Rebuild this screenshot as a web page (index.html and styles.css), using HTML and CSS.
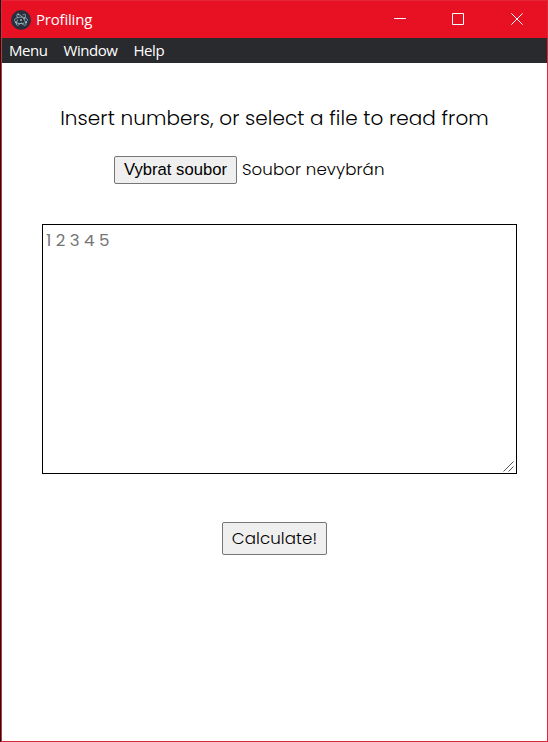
FILE: index.html
```
<!DOCTYPE html>
<html lang="en">
<head>
<meta charset="utf-8">
<title>Profiling</title>
<link rel="stylesheet" href="styles.css">
</head>
<body>
<div class="window">
  <header class="titlebar">
    <svg class="logo" viewBox="0 0 20 20">
      <circle cx="10" cy="10" r="10" fill="#2b2e3b"/>
      <g fill="none" stroke="#9fc5cf" stroke-width=".8" stroke-linecap="round">
        <path d="M8 4.600C9.600 5 12 7.200 13.500 10c1.300 2.500 1.700 4.600.8 5.200-.7.4-1.900-.2-3.200-1.400"/>
        <path d="M12.800 7.400c2.300.5 3.700 1.500 3.700 2.600 0 .7-.5 1.300-1.400 1.800M11.500 7.100c-2-.2-4.500.2-6.100 1C3 9.200 2.900 10.700 4.400 11.800"/>
        <path d="M6.300 7.500C5.600 5.700 5.600 4.500 6.300 4.200M12 4.800c1-.5 1.900-.6 2.300-.1.500.6.200 2.200-.8 4.200M5.600 12.800c1.700 1 4.800 1.200 7.400.3M6.600 9.800c-1.300 2.500-1.600 4.700-.7 5.300.8.500 2.400-.4 4.200-2.200"/>
      </g>
      <g fill="#9fc5cf"><circle cx="10" cy="10" r=".9"/><circle cx="4.800" cy="12.300" r=".9"/><circle cx="15.200" cy="12.300" r=".9"/><circle cx="7.300" cy="4.300" r=".9"/></g>
    </svg>
    <span class="title">Profiling</span>
    <div class="controls">
      <svg viewBox="0 0 12 12"><path d="M0 5.500H12"/></svg>
      <svg viewBox="0 0 12 12"><path d="M.5.5h11v11H.5z"/></svg>
      <svg viewBox="0 0 12 12"><path d="M.3.3l11.400 11.400M11.700.3L.3 11.700"/></svg>
    </div>
  </header>
  <nav class="menubar"><span>Menu</span><span>Window</span><span>Help</span></nav>
  <main>
    <h1>Insert numbers, or select a file to read from</h1>
    <div class="picker"><button class="choose">Vybrat soubor</button><span>Soubor nevybrán</span></div>
    <div class="field">
      <textarea placeholder="1 2 3 4 5"></textarea>
      <svg class="grip" viewBox="0 0 11 11"><path d="M.5 10.500l10-10M5.500 10.500l5-5"/></svg>
    </div>
    <button class="calc">Calculate!</button>
  </main>
</div>
</body>
</html>
```

FILE: styles.css
```
* { box-sizing: border-box; }
body {
  margin: 0;
  padding-left: 1px;
  height: 742px;
  overflow: hidden;
  background: #101012;
  font-family: Poppins, Inter, sans-serif;
  color: #000;
}
.window {
  height: 742px;
  border: 1px solid #d9283a;
  border-top-color: #e42536;
  background: #fff;
  display: flex;
  flex-direction: column;
}
.titlebar {
  height: 37px;
  background: #e81123;
  display: flex;
  align-items: center;
  padding-left: 9px;
  color: #fff;
  font: 15px/20px "Segoe UI", "Open Sans", sans-serif;
}
.logo { width: 20px; height: 20px; margin-right: 5px; }
.title { letter-spacing: -0.2px; padding-bottom: 2px; }
.controls { margin-left: auto; display: flex; gap: 46px; padding-right: 24px; }
.controls svg { width: 12px; height: 12px; fill: none; stroke: #fff; stroke-width: 1; position: relative; top: -0.5px; left: -1px; }
.controls svg:last-child { left: 0; }
.menubar {
  height: 25px;
  background: #292a2d;
  color: #fff;
  display: flex;
  gap: 16px;
  padding-left: 7px;
  font: 15px/25px "Segoe UI", "Open Sans", sans-serif;
  letter-spacing: -0.45px;
}
main { display: flex; flex-direction: column; align-items: center; }
h1 {
  margin: 40px 0 0;
  font-size: 20px;
  line-height: 30px;
  font-weight: 300;
  letter-spacing: 0.08px;
  white-space: nowrap;
}
.picker {
  display: flex;
  align-items: center;
  align-self: flex-start;
  gap: 5px;
  margin: 22px 0 0 112px;
  height: 30px;
  font-size: 16.667px;
  font-weight: 300;
  letter-spacing: 0.07px;
}
.picker span { position: relative; top: -1px; }
button {
  border: 1px solid #767676;
  border-radius: 2px;
  background: #efefef;
  color: #000;
  padding: 0;
  white-space: nowrap;
}
.choose { width: 123px; height: 28px; font: 16.667px "Liberation Sans", sans-serif; }
.field { position: relative; align-self: flex-start; margin: 39px 0 0 40px; width: 475px; height: 250px; }
textarea {
  display: block;
  width: 100%;
  height: 100%;
  border: 1px solid #000;
  border-radius: 0;
  padding: 3px;
  outline: none;
  resize: none;
  background: #fff;
  font: 400 16.667px/25px Poppins, Inter, sans-serif;
}
textarea::placeholder { color: #757575; }
.grip { position: absolute; right: 3px; bottom: 2px; width: 11px; height: 11px; fill: none; stroke: #555; stroke-width: 1; }
.calc { width: 105px; height: 33px; margin-top: 48px; font: 300 16.667px Poppins, Inter, sans-serif; letter-spacing: 0.07px; }
```
